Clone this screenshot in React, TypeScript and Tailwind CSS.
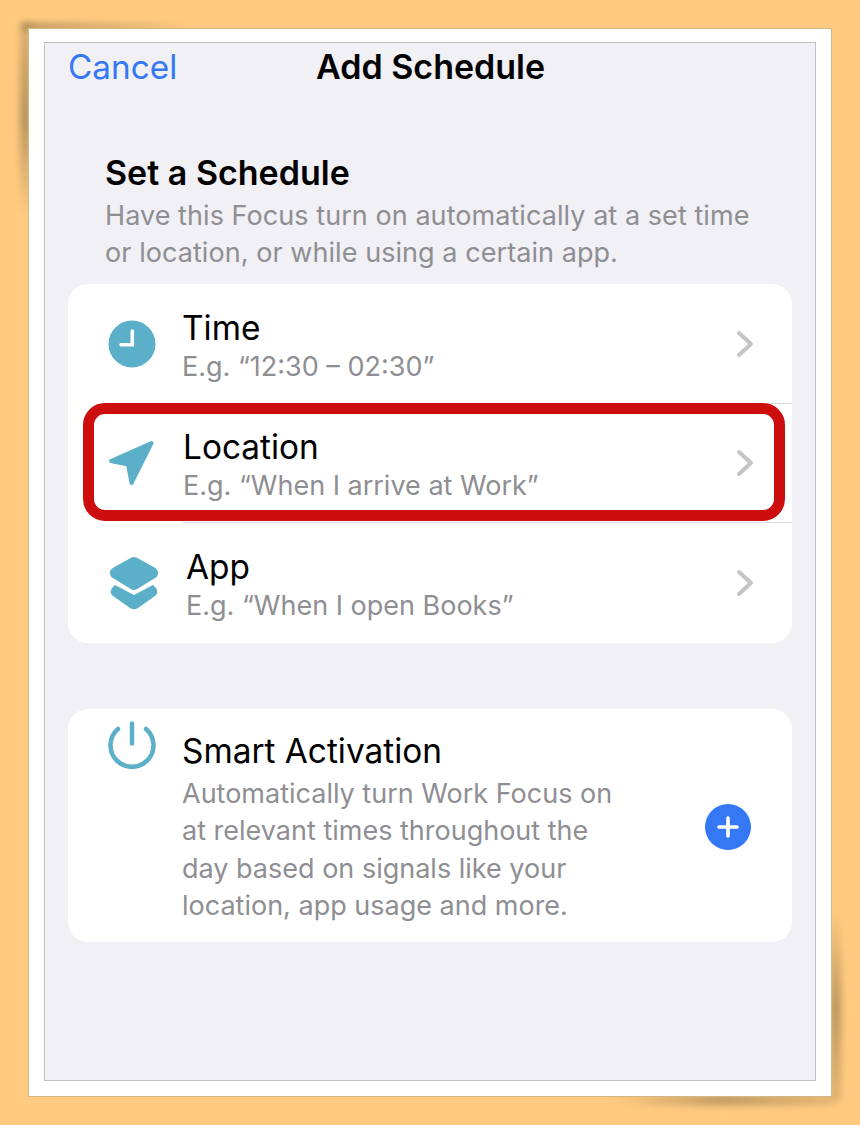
import { ReactNode } from "react";

const rowTitle = "text-[33.400px] leading-[40px] text-black";
const rowSub = "text-[27px] leading-[37px] text-[#8e8e93]";

function Chevron() {
  return (
    <svg width="18" height="28" viewBox="0 0 18 28" fill="none" className="shrink-0">
      <path d="M3 3 L15 14 L3 25" stroke="#c4c4c6" strokeWidth="4" strokeLinecap="round" strokeLinejoin="round" />
    </svg>
  );
}

function ClockIcon() {
  return (
    <svg width="48" height="48" viewBox="0 0 48 48">
      <circle cx="24" cy="24" r="23.500" fill="#5bafc8" />
      <path d="M24.300 11 V24.800 H13" fill="none" stroke="#fff" strokeWidth="3.600" strokeLinecap="round" />
    </svg>
  );
}

function ArrowIcon() {
  return (
    <svg width="48" height="48" viewBox="0 0 48 48">
      <path d="M43.500 4 L3 22 L20 25.500 L23.500 44 Z" fill="#5bafc8" stroke="#5bafc8" strokeWidth="4" strokeLinejoin="round" />
    </svg>
  );
}

function StackIcon() {
  return (
    <svg width="48" height="54" viewBox="0 0 48 54" className="ml-[2px]">
      <path d="M24 7 L42 17 L24 28 L6 17 Z" fill="#5bafc8" stroke="#5bafc8" strokeWidth="12" strokeLinejoin="round" />
      <path d="M5 29 L24 39 L43 29 L46 32 Q49 37 45 40 L28 52 Q24 54.500 20 52 L3 40 Q-1 37 2 32 Z" fill="#5bafc8" />
    </svg>
  );
}

function PowerIcon() {
  return (
    <svg width="48" height="48" viewBox="0 0 48 48">
      <path d="M38 8 A21.500 21.500 0 1 1 10 8" fill="none" stroke="#5bafc8" strokeWidth="4.500" strokeLinecap="round" />
      <path d="M24 2.500 V22.500" fill="none" stroke="#5bafc8" strokeWidth="4.500" strokeLinecap="round" />
    </svg>
  );
}

function Row({ icon, title, sub, textPad, divider }: { icon: ReactNode; title: string; sub: string; textPad: string; divider?: boolean }) {
  return (
    <div className="relative flex h-[119.500px] items-center pr-[38px]">
      <div className="w-[114px] shrink-0 pl-[40px]">{icon}</div>
      <div className={`flex-1 pt-[5px] ${textPad}`}>
        <div className={rowTitle}>{title}</div>
        <div className={rowSub}>{sub}</div>
      </div>
      <Chevron />
      {divider && <div className="absolute bottom-0 left-[115px] right-0 h-px bg-[#d9d9dc]" />}
    </div>
  );
}

export default function App() {
  return (
    <div className="relative h-[1125px] w-[860px] overflow-hidden bg-[#ffcb80] pl-[28px] pt-[28px] font-['Inter','Liberation_Sans',sans-serif]">
      {/* paper shadow, top left and bottom right */}
      <div className="absolute left-[22px] top-[23px] h-[7px] w-[180px] bg-gradient-to-r from-[#6b5a3a]/50 to-transparent blur-[3px]" />
      <div className="absolute left-[21px] top-[24px] h-[190px] w-[9px] bg-gradient-to-b from-[#6b5a3a]/30 via-[#6b5a3a]/65 to-transparent blur-[4px]" />
      <div className="absolute bottom-[21px] right-[28px] h-[8px] w-[220px] bg-gradient-to-r from-transparent via-[#6b5a3a]/60 to-[#6b5a3a]/25 blur-[4px]" />
      <div className="absolute bottom-[24px] right-[20px] h-[190px] w-[9px] bg-gradient-to-b from-transparent via-[#6b5a3a]/60 to-[#6b5a3a]/25 blur-[4px]" />

      <div className="relative h-[1069px] w-[804px] border border-[#d2b583] bg-white px-[15px] pb-[15px] pt-[13px]">
        <div className="relative h-[1039px] w-[772px] border border-[#c0c0c4] bg-[#f0f0f5] px-[23px]">
          {/* nav */}
          <div className="relative flex h-[48px] items-center">
            <span className="text-[33.300px] leading-[48px] text-[#3478f6]">Cancel</span>
            <span className="absolute left-[248px] text-[34px] font-semibold leading-[46px] text-black">Add Schedule</span>
          </div>

          {/* heading */}
          <div className="px-[37px] pt-[62px]">
            <div className="text-[34px] font-semibold leading-[40px] text-black">Set a Schedule</div>
            <div className="mt-[4px] text-[27px] leading-[37px] tracking-[0.06px] text-[#8e8e93]">
              Have this Focus turn on automatically at a set time
              <br />
              or location, or while using a certain app.
            </div>
          </div>

          {/* schedule options */}
          <div className="mt-[13px] w-[724px] overflow-hidden rounded-[20px] bg-white">
            <Row icon={<ClockIcon />} title="Time" sub="E.g. “12:30 – 02:30”" textPad="" divider />
            <Row icon={<ArrowIcon />} title="Location" sub="E.g. “When I arrive at Work”" textPad="pl-px" divider />
            <Row icon={<StackIcon />} title="App" sub="E.g. “When I open Books”" textPad="pl-[4px]" />
          </div>

          {/* smart activation */}
          <div className="relative mt-[66.500px] flex h-[233px] w-[724px] rounded-[20px] bg-white pr-[41px]">
            <div className="w-[114px] shrink-0 pl-[40px] pt-[12px]">
              <PowerIcon />
            </div>
            <div className="flex-1 pt-[22px]">
              <div className={rowTitle}>Smart Activation</div>
              <div className="mt-[3.500px] text-[27px] leading-[37.500px] text-[#8e8e93]">
                Automatically turn Work Focus on
                <br />
                at relevant times throughout the
                <br />
                day based on signals like your
                <br />
                location, app usage and more.
              </div>
            </div>
            <div className="flex items-center pt-[3px]">
              <div className="flex h-[46px] w-[46px] items-center justify-center rounded-full bg-[#3478f6]">
                <svg width="24" height="24" viewBox="0 0 24 24">
                  <path d="M12 3 V21 M3 12 H21" stroke="#fff" strokeWidth="3.600" strokeLinecap="round" />
                </svg>
              </div>
            </div>
          </div>

          {/* highlight around Location */}
          <div className="absolute left-[38px] top-[360px] h-[118px] w-[702px] rounded-[22px] border-[11px] border-[#cc0e0e]" />
        </div>
      </div>
    </div>
  );
}
